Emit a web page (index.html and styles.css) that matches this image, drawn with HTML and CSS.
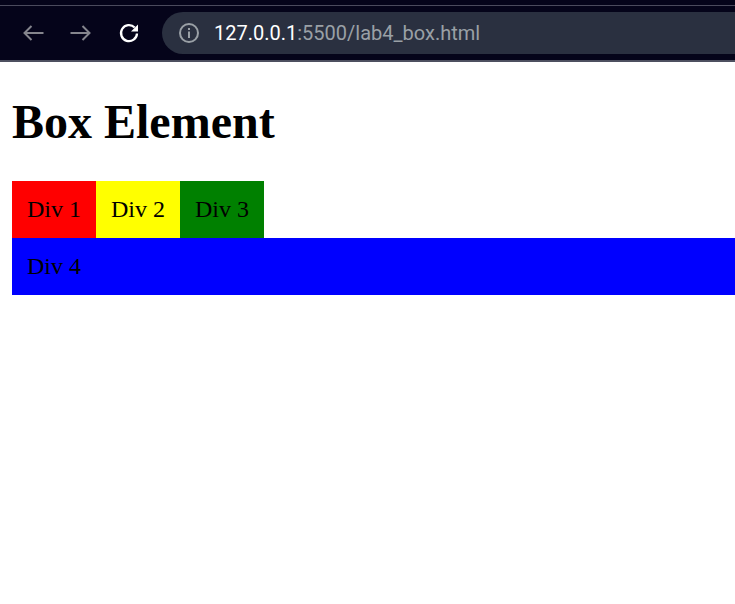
FILE: index.html
```html
<!DOCTYPE html>
<html>
<head>
<meta charset="utf-8">
<title>lab4_box</title>
<link rel="stylesheet" href="styles.css">
</head>
<body>
<div class="chrome">
  <div class="topline"></div>
  <div class="toolbar">
    <div class="nav">
      <svg class="icon" width="24" height="24" viewBox="0 0 24 24"><path d="M22.5 12H3.5M10.5 5l-7 7 7 7" fill="none" stroke="#85858d" stroke-width="2"/></svg>
      <svg class="icon" width="24" height="24" viewBox="0 0 24 24"><path d="M1.5 12h19M13.5 5l7 7-7 7" fill="none" stroke="#85858d" stroke-width="2"/></svg>
      <svg class="icon" width="24" height="24" viewBox="0 0 24 24"><path d="M20 12.5a8 8 0 1 1-2.3-6" fill="none" stroke="#ffffff" stroke-width="2.3"/><path d="M21 3.5v7h-7z" fill="#ffffff"/></svg>
    </div>
    <div class="omnibox">
      <svg class="info" width="22" height="22" viewBox="0 0 22 22"><circle cx="11" cy="11" r="9" fill="none" stroke="#9aa0a6" stroke-width="2"/><rect x="10" y="9.5" width="2" height="6.5" fill="#9aa0a6"/><rect x="10" y="6" width="2" height="2" fill="#9aa0a6"/></svg>
      <span class="url"><span class="host">127.0.0.1</span>:5500/lab4_box.html</span>
    </div>
  </div>
  <div class="bottomline"></div>
</div>
<div class="page">
  <h1 class="title">Box Element</h1>
  <div class="row">
    <div class="box red">Div 1</div>
    <div class="box yellow">Div 2</div>
    <div class="box green">Div 3</div>
  </div>
  <div class="box blue">Div 4</div>
</div>
</body>
</html>
```
FILE: styles.css
```css
html, body {
  margin: 0;
  padding: 0;
  background: #ffffff;
  overflow: hidden;
}
.chrome {
  background: #05041a;
}
.topline {
  height: 5px;
  border-bottom: 1px solid #4b4b5d;
}
.toolbar {
  height: 54px;
  display: flex;
  align-items: center;
}
.nav {
  display: flex;
  align-items: center;
  gap: 24px;
  padding-left: 21px;
  width: 141px;
}
.icon {
  display: block;
}
.omnibox {
  flex: 1;
  height: 42px;
  background: #2a3040;
  border-radius: 21px 0 0 21px;
  display: flex;
  align-items: center;
  padding-left: 16px;
}
.info {
  display: block;
  margin-right: 14px;
}
.url {
  font-family: Roboto, "Noto Sans", sans-serif;
  font-size: 20px;
  color: #9aa0a6;
  white-space: nowrap;
}
.host {
  color: #ffffff;
}
.bottomline {
  height: 2px;
  background: #4e5060;
}
.page {
  padding-left: 12px;
  font-family: "Liberation Serif", "Times New Roman", serif;
}
.title {
  font-size: 48px;
  font-weight: bold;
  margin: 32px 0;
}
.row {
  display: flex;
}
.box {
  padding: 15px;
  font-size: 24px;
}
.red { background: #ff0000; }
.yellow { background: #ffff00; }
.green { background: #008000; }
.blue { background: #0000ff; }
```
